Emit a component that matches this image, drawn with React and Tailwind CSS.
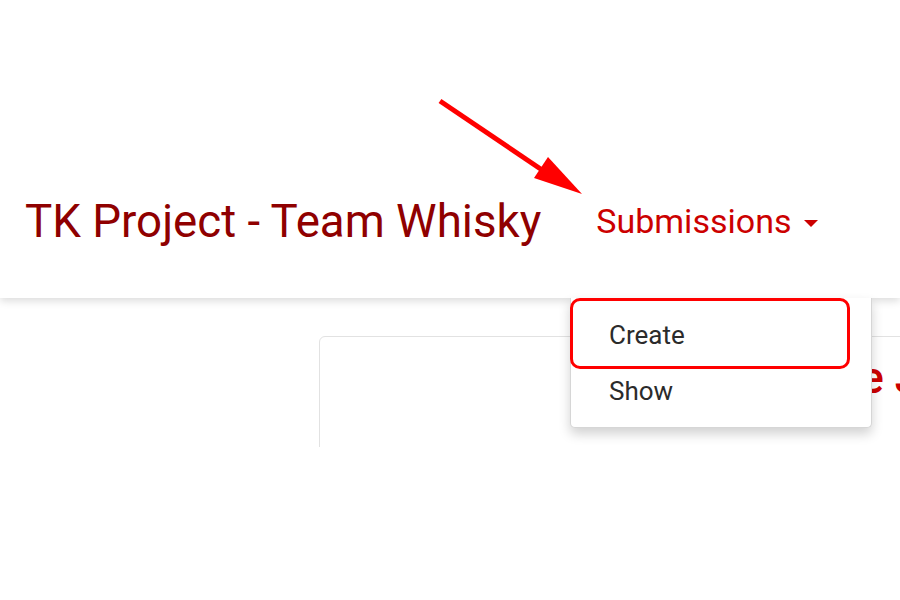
export default function App() {
  return (
    <div className="relative w-[900px] h-[600px] bg-white overflow-hidden font-['Roboto','Liberation_Sans',sans-serif]">
      {/* cropped screenshot area */}
      <div className="relative h-[447px] overflow-hidden">
        <header className="relative z-10 h-[298px] bg-white shadow-[0_3px_8px_rgba(0,0,0,0.14)] flex items-end pb-[53px] pl-[25px]">
          <h1 className="text-[45.7px] leading-none text-[#8f0000]">TK Project - Team Whisky</h1>
          <button className="ml-[55px] mb-[7px] flex items-center text-[34px] leading-none text-[#cc0000]">
            Submissions
            <span className="ml-[13px] mt-[4px] w-0 h-0 border-l-[7px] border-r-[7px] border-t-[7px] border-l-transparent border-r-transparent border-t-[#cc0000]" />
          </button>
        </header>

        <main className="pt-[38px] pl-[319px]">
          <div className="w-[900px] h-[200px] border border-[#e2e2e2] rounded-md pt-[19px] pl-[405px]">
            <h2 className="text-[44px] leading-none font-medium text-[#cc0000] whitespace-nowrap">Manage Judges</h2>
          </div>
        </main>
      </div>

      {/* dropdown menu */}
      <div className="absolute z-20 left-[570px] top-[298px] w-[302px] h-[130px] bg-white border border-[#d6d6d6] border-t-0 rounded-b-[5px] shadow-[0_6px_12px_rgba(0,0,0,0.18)] py-[9px]">
        <div className="h-[56px] pl-[38px] text-[26px] leading-[56px] text-[#2b2b2b]">Create</div>
        <div className="h-[56px] pl-[38px] text-[26px] leading-[56px] text-[#2b2b2b]">Show</div>
      </div>

      {/* annotation: highlight box */}
      <div className="absolute z-30 left-[570px] top-[298px] w-[280px] h-[71px] border-[3px] border-[#ff0000] rounded-[10px]" />

      {/* annotation: arrow */}
      <svg className="absolute z-30 left-0 top-0 pointer-events-none" width="900" height="600">
        <line x1="440" y1="101" x2="548" y2="174" stroke="#ff0000" strokeWidth="5" />
        <polygon points="582,194 548,157 534,178" fill="#ff0000" />
      </svg>
    </div>
  )
}
